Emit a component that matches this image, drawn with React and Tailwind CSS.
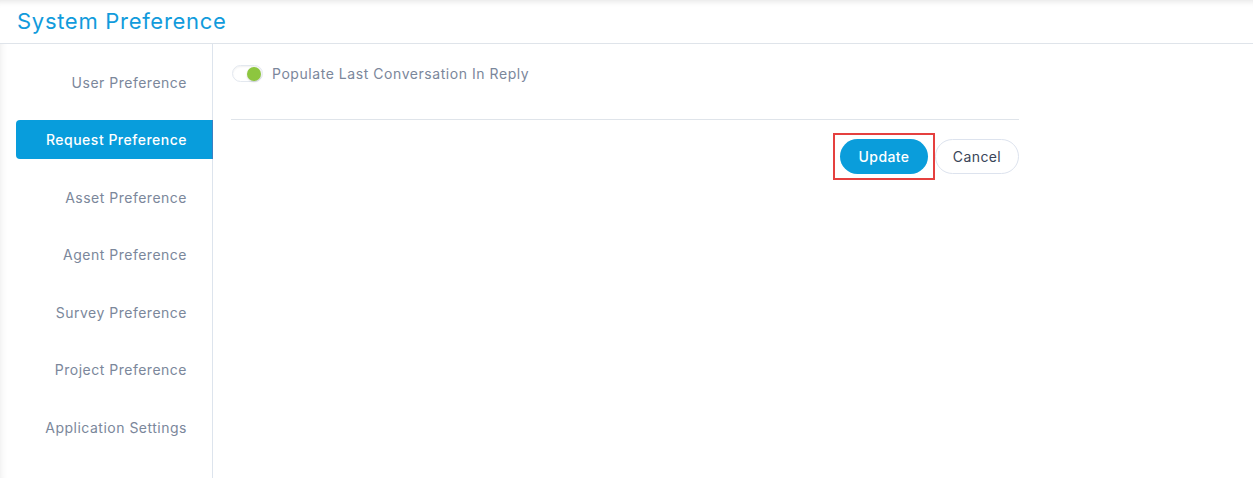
const menuItems = [
  'User Preference',
  'Request Preference',
  'Asset Preference',
  'Agent Preference',
  'Survey Preference',
  'Project Preference',
  'Application Settings'
]

function Toggle({ on = true }) {
  return (
    <div className="relative h-[17px] w-[31px] rounded-full border border-[#e3e8ef] bg-white shadow-[inset_0_1px_2px_rgba(0,0,0,0.06)]">
      <div
        className={`absolute top-[1px] h-[14px] w-[14px] rounded-full bg-[#8dc63f] shadow-[0_1px_2px_rgba(0,0,0,0.15)] ${on ? 'right-[1px]' : 'left-[1px]'}`}
      />
    </div>
  )
}

export default function App() {
  return (
    <div className="h-[478px] w-full overflow-hidden bg-white font-['Inter',sans-serif]">
      <header className="flex h-[44px] items-center border-b border-[#dfe4ea] px-[17px] shadow-[inset_0_7px_6px_-6px_rgba(0,0,0,0.12)]">
        <h1 className="text-[22px] font-normal tracking-[0.7px] text-[#119bdc]">System Preference</h1>
      </header>

      <div className="flex h-[434px] shadow-[inset_8px_0_7px_-7px_rgba(0,0,0,0.08)]">
        <nav className="flex w-[213px] shrink-0 flex-col gap-[18.5px] border-r border-[#dde4ed] pl-[16px] pt-[18.5px]">
          {menuItems.map((item) => {
            const active = item === 'Request Preference'
            return (
              <div
                key={item}
                className={`flex h-[39px] items-center justify-end pr-[25px] text-[14px] tracking-[0.5px] ${
                  active
                    ? 'mr-[-1px] rounded-l-[4px] border-r border-[#3a7fc3] bg-[#089ddc] font-medium text-white'
                    : 'text-[#7b879b]'
                }`}
              >
                {item}
              </div>
            )
          })}
        </nav>

        <main className="w-[806px] pl-[18px] pt-[19px]">
          <div className="flex items-center gap-[9px] pl-[1px]">
            <Toggle />
            <span className="text-[14px] tracking-[0.55px] text-[#7b879b]">Populate Last Conversation In Reply</span>
          </div>

          <div className="mt-[35px] border-t border-[#dfe4ea]" />

          <div className="mt-[13px] flex justify-end">
            <div className="border-2 border-[#e5403f] px-[5px] py-[4px]">
              <button className="h-[35px] w-[88px] rounded-full bg-[#0a9ddb] text-[14px] font-medium tracking-[0.4px] text-white">
                Update
              </button>
            </div>
            <button className="mt-[6px] h-[35px] w-[84px] rounded-full border border-[#dde3ee] bg-white text-[14px] tracking-[0.4px] text-[#3a4558]">
              Cancel
            </button>
          </div>
        </main>
      </div>
    </div>
  )
}
